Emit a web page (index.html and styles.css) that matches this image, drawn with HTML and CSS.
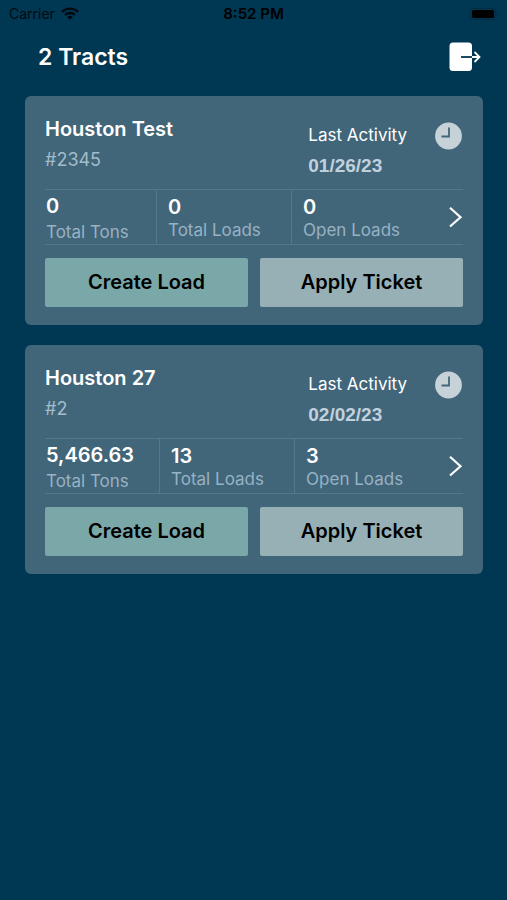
FILE: index.html
```html
<!DOCTYPE html>
<html lang="en">

<head>
    <meta charset="utf-8">
    <meta name="viewport" content="width=device-width, initial-scale=1">
    <title>Tracts</title>
    <link rel="stylesheet" href="styles.css">
</head>

<body>
    <div class="status-bar">
        <span class="carrier">
            Carrier
            <svg width="18" height="13" viewBox="0 0 18 13" aria-hidden="true">
                <g fill="none" stroke="currentColor" stroke-width="2.4">
                    <path d="M1 4.9a11.4 11.4 0 0 1 16 0" />
                    <path d="M4 8a7.1 7.1 0 0 1 10 0" />
                </g>
                <path d="M9 12.8 6.2 10a4 4 0 0 1 5.6 0z" fill="currentColor" />
            </svg>
        </span>
        <span class="time">8:52 PM</span>
        <span class="battery">
            <svg width="30" height="12" viewBox="0 0 30 12" aria-hidden="true">
                <rect x="0.5" y="0.5" width="25" height="11" rx="3" fill="none" stroke="currentColor" opacity="0.2" />
                <rect x="2" y="2" width="22" height="8" rx="1.5" fill="currentColor" />
                <path d="M27 4v4a2.2 2.2 0 0 0 0-4z" fill="currentColor" opacity="0.2" />
            </svg>
        </span>
    </div>

    <header class="page-header">
        <h1>2 Tracts</h1>
        <button class="icon-button" aria-label="Log out">
            <svg width="32" height="30" viewBox="0 0 32 30">
                <rect x="0.5" y="0.5" width="22.5" height="28.5" rx="3.5" fill="#fff" />
                <path d="M12 15h11" stroke="#003752" stroke-width="1.8" />
                <path d="M23 15h7.5M25.5 10l5 5-5 5" fill="none" stroke="#fff" stroke-width="1.8" />
            </svg>
        </button>
    </header>

    <main class="tracts">
        <article class="card">
            <div class="card-top">
                <div class="tract">
                    <h2>Houston Test</h2>
                    <p class="number">#2345</p>
                </div>
                <div class="activity">
                    <p>Last Activity</p>
                    <p class="date">01/26/23</p>
                </div>
                <svg class="clock" width="28" height="28" viewBox="0 0 28 28" aria-hidden="true">
                    <circle cx="13.5" cy="14" r="13.4" fill="#c6d1d8" />
                    <path d="M14 5.5v9H6.5" fill="none" stroke="#416679" stroke-width="1.8" />
                </svg>
            </div>
            <div class="stats">
                <dl>
                    <div class="stat">
                        <dt>Total Tons</dt>
                        <dd>0</dd>
                    </div>
                    <div class="stat">
                        <dt>Total Loads</dt>
                        <dd>0</dd>
                    </div>
                    <div class="stat">
                        <dt>Open Loads</dt>
                        <dd>0</dd>
                    </div>
                </dl>
                <a class="details" href="#" aria-label="Houston Test details">
                    <svg width="15" height="22" viewBox="0 0 15 22">
                        <path d="M2 1.8L12.500 11.2 2 20.5" fill="none" stroke="#fff" stroke-width="2.2" />
                    </svg>
                </a>
            </div>
            <div class="actions">
                <button class="create">Create Load</button>
                <button class="apply">Apply Ticket</button>
            </div>
        </article>

        <article class="card">
            <div class="card-top">
                <div class="tract">
                    <h2>Houston 27</h2>
                    <p class="number">#2</p>
                </div>
                <div class="activity">
                    <p>Last Activity</p>
                    <p class="date">02/02/23</p>
                </div>
                <svg class="clock" width="28" height="28" viewBox="0 0 28 28" aria-hidden="true">
                    <circle cx="13.5" cy="14" r="13.4" fill="#c6d1d8" />
                    <path d="M14 5.5v9H6.5" fill="none" stroke="#416679" stroke-width="1.8" />
                </svg>
            </div>
            <div class="stats">
                <dl>
                    <div class="stat">
                        <dt>Total Tons</dt>
                        <dd>5,466.63</dd>
                    </div>
                    <div class="stat">
                        <dt>Total Loads</dt>
                        <dd>13</dd>
                    </div>
                    <div class="stat">
                        <dt>Open Loads</dt>
                        <dd>3</dd>
                    </div>
                </dl>
                <a class="details" href="#" aria-label="Houston 27 details">
                    <svg width="15" height="22" viewBox="0 0 15 22">
                        <path d="M2 1.8L12.5 11.2 2 20.5" fill="none" stroke="#fff" stroke-width="2.2" />
                    </svg>
                </a>
            </div>
            <div class="actions">
                <button class="create">Create Load</button>
                <button class="apply">Apply Ticket</button>
            </div>
        </article>
    </main>
</body>

</html>
```
FILE: styles.css
```css
* {
    box-sizing: border-box;
}

body {
    min-height: 100vh;
    margin: 0;
    color: #fff;
    background: #003752;
    font-family: Inter, "Liberation Sans", sans-serif;
}

h1,
h2,
p,
dl,
dd {
    margin: 0;
}

button {
    border: none;
    padding: 0;
    font-family: inherit;
}

.status-bar {
    display: grid;
    grid-template-columns: 1fr auto 1fr;
    align-items: center;
    height: 27px;
    padding: 0 7px;
    color: #000;
    font-size: 14px;
}

.carrier {
    display: flex;
    align-items: center;
    gap: 6px;
    padding-left: 2px;
    opacity: 0.8;
}

.time {
    font-size: 15px;
    font-weight: 600;
}

.battery {
    display: flex;
    justify-content: flex-end;
}

.page-header {
    display: flex;
    justify-content: space-between;
    align-items: center;
    height: 60px;
    padding: 0 26px 0 38px;
}

.page-header h1 {
    font-size: 23px;
    font-weight: 600;
}

.icon-button {
    display: flex;
    background: transparent;
}

.tracts {
    display: flex;
    flex-direction: column;
    gap: 20px;
    padding: 9px 24px 20px 25px;
}

.card {
    padding: 20px 20px 18px;
    border-radius: 6px;
    background: #416679;
}

.card-top {
    display: flex;
    height: 73px;
}

.tract {
    flex-grow: 1;
}

.card h2 {
    margin-top: 1px;
    line-height: 24px;
    font-size: 20px;
    font-weight: 600;
}

.number {
    margin-top: 8px;
    color: #a3bccb;
    font-size: 18px;
    line-height: 22px;
}

.activity {
    padding-top: 8px;
    margin-right: 28px;
    font-size: 17px;
    line-height: 22px;
}

.date {
    margin-top: 9px;
    color: #c1d0df;
    font-family: "Liberation Sans", sans-serif;
    font-size: 19px;
    font-weight: bold;
}

.clock {
    margin-top: 6px;
}

.stats {
    display: flex;
    justify-content: space-between;
    align-items: center;
    border: solid #54788b;
    border-width: 1px 0;
}

.stats dl {
    display: flex;
}

.stat {
    display: flex;
    flex-direction: column-reverse;
    justify-content: flex-end;
    min-width: 135px;
    height: 54px;
    padding: 5px 25px 0 11px;
    border-left: 1px solid #54788b;
}

.stat:first-child {
    min-width: 111px;
    padding-top: 4px;
    padding-left: 1px;
    border-left: none;
}

.stat:first-child dt {
    padding-top: 3px;
}

.stat:last-child {
    padding-right: 0;
}

.stat dt {
    color: #98b2c4;
    font-size: 17px;
    line-height: 22px;
}

.stat dd {
    font-size: 20px;
    font-weight: 600;
    line-height: 24px;
}

.details {
    display: flex;
}

.actions {
    display: grid;
    grid-template-columns: 1fr 1fr;
    gap: 12px;
    margin-top: 13px;
}

.actions button {
    height: 49px;
    padding-bottom: 1px;
    border-radius: 2px;
    color: #000;
    font-size: 20px;
    font-weight: 600;
}

.actions .create {
    background: #7aa7a7;
}

.actions .apply {
    background: #96b0b6;
}
```
